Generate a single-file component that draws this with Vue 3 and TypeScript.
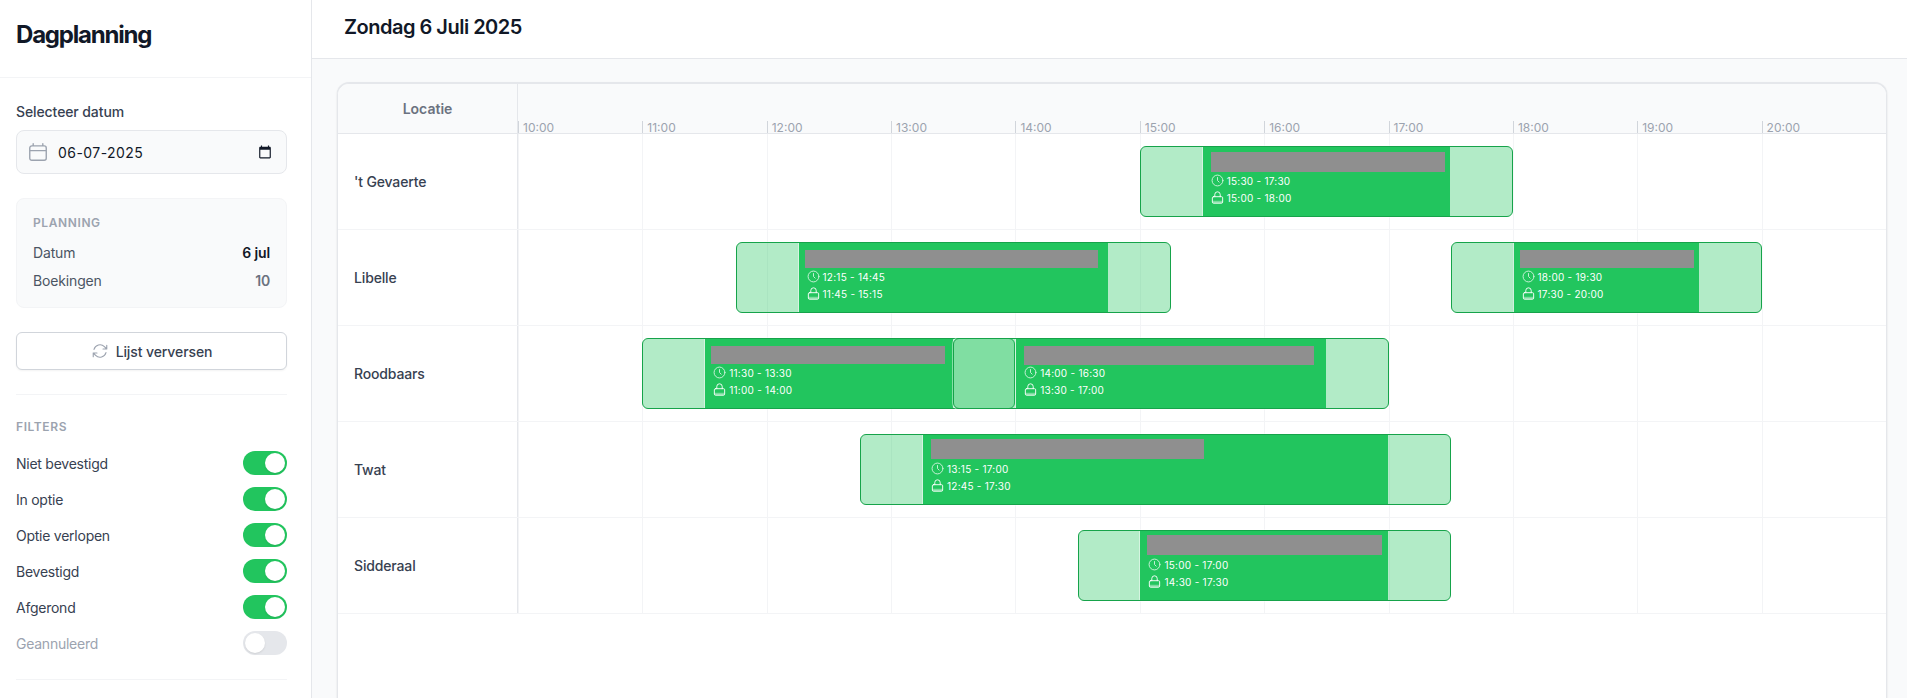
<script setup lang="ts">
interface Booking {
  outer: [string, string]
  inner: [string, string]
  barLeft: number
  barWidth: number
  barTop: number
  barHeight: number
}
interface Row {
  name: string
  bookings: Booking[]
}

const START = 10
const HOURS = 11

const hours: string[] = Array.from({ length: HOURS }, (_, i) => `${START + i}:00`)
const filters = [
  { label: 'Niet bevestigd', on: true },
  { label: 'In optie', on: true },
  { label: 'Optie verlopen', on: true },
  { label: 'Bevestigd', on: true },
  { label: 'Afgerond', on: true },
  { label: 'Geannuleerd', on: false },
]

const rows: Row[] = [
  { name: "'t Gevaerte", bookings: [{ outer: ['15:00', '18:00'], inner: ['15:30', '17:30'], barLeft: 8, barWidth: 234, barTop: 0, barHeight: 20 }] },
  {
    name: 'Libelle',
    bookings: [
      { outer: ['11:45', '15:15'], inner: ['12:15', '14:45'], barLeft: 6, barWidth: 293, barTop: 2, barHeight: 18 },
      { outer: ['17:30', '20:00'], inner: ['18:00', '19:30'], barLeft: 6, barWidth: 174, barTop: 2, barHeight: 18 },
    ],
  },
  {
    name: 'Roodbaars',
    bookings: [
      { outer: ['11:00', '14:00'], inner: ['11:30', '13:30'], barLeft: 6, barWidth: 234, barTop: 2, barHeight: 18 },
      { outer: ['13:30', '17:00'], inner: ['14:00', '16:30'], barLeft: 8, barWidth: 290, barTop: 2, barHeight: 19 },
    ],
  },
  { name: 'Twat', bookings: [{ outer: ['12:45', '17:30'], inner: ['13:15', '17:00'], barLeft: 8, barWidth: 273, barTop: -1, barHeight: 20 }] },
  { name: 'Sidderaal', bookings: [{ outer: ['14:30', '17:30'], inner: ['15:00', '17:00'], barLeft: 7, barWidth: 235, barTop: -1, barHeight: 20 }] },
]

function toHours(t: string): number {
  const [h, m] = t.split(':').map(Number)
  return h + m / 60
}

function outerStyle(b: Booking) {
  const s = toHours(b.outer[0])
  const e = toHours(b.outer[1])
  return { left: `${((s - START) / HOURS) * 100}%`, width: `${((e - s) / HOURS) * 100}%` }
}

function innerStyle(b: Booking) {
  const s = toHours(b.outer[0])
  const e = toHours(b.outer[1])
  const a = toHours(b.inner[0])
  const z = toHours(b.inner[1])
  return { marginLeft: `${((a - s) / (e - s)) * 100}%`, width: `${((z - a) / (e - s)) * 100}%` }
}

function barStyle(b: Booking) {
  return {
    marginLeft: `${b.barLeft - 8}px`,
    marginTop: `${b.barTop}px`,
    width: `${b.barWidth}px`,
    height: `${b.barHeight}px`,
  }
}

function range(r: [string, string]): string {
  return `${r[0]} - ${r[1]}`
}
</script>

<template>
  <div class="page">
    <aside class="sidebar">
      <div class="brand"><h1>Dagplanning</h1></div>
      <div class="side-body">
        <label class="field-label" for="datum">Selecteer datum</label>
        <div class="date-field">
          <svg class="cal" viewBox="0 0 24 24" fill="none" stroke="currentColor" stroke-width="1.5" stroke-linecap="round" stroke-linejoin="round">
            <path d="M6.75 3v2.25M17.25 3v2.25M3 18.75V7.5a2.25 2.25 0 0 1 2.25-2.25h13.5A2.25 2.25 0 0 1 21 7.5v11.25A2.25 2.25 0 0 1 18.75 21H5.25A2.25 2.25 0 0 1 3 18.75ZM3 10.5h18" />
          </svg>
          <input id="datum" class="date-input" type="text" value="06-07-2025" readonly />
          <svg class="picker" viewBox="0 0 24 24" fill="currentColor">
            <path d="M20 3h-1V1h-2v2H7V1H5v2H4c-1.1 0-2 .9-2 2v16c0 1.1.9 2 2 2h16c1.1 0 2-.9 2-2V5c0-1.1-.9-2-2-2zm0 18H4V8h16v13z" />
          </svg>
        </div>

        <section class="summary">
          <h2 class="caps">PLANNING</h2>
          <div class="sum-row first"><span>Datum</span><strong>6 jul</strong></div>
          <div class="sum-row"><span>Boekingen</span><strong class="muted">10</strong></div>
        </section>

        <button class="refresh" type="button">
          <svg viewBox="0 0 24 24" fill="none" stroke="currentColor" stroke-width="1.5" stroke-linecap="round" stroke-linejoin="round">
            <path d="M16.023 9.348h4.992v-.001M2.985 19.644v-4.992m0 0h4.992m-4.993 0 3.181 3.183a8.25 8.25 0 0 0 13.803-3.7M4.031 9.865a8.25 8.25 0 0 1 13.803-3.7l3.181 3.182m0-4.991v4.99" />
          </svg>
          <span>Lijst verversen</span>
        </button>

        <hr class="divider" />

        <h2 class="caps filters-title">FILTERS</h2>
        <ul class="filters">
          <li v-for="f in filters" :key="f.label" :class="{ off: !f.on }">
            <span>{{ f.label }}</span>
            <span class="toggle" :class="{ on: f.on }"><i class="knob"></i></span>
          </li>
        </ul>

        <hr class="divider" />
      </div>
    </aside>

    <main class="main">
      <header class="topbar"><h2>Zondag 6 Juli 2025</h2></header>
      <div class="content">
        <div class="card">
          <div class="head-row">
            <div class="head-loc">Locatie</div>
            <div class="head-times">
              <div v-for="h in hours" :key="h" class="tick">{{ h }}</div>
            </div>
          </div>

          <div v-for="row in rows" :key="row.name" class="row">
            <div class="row-name">{{ row.name }}</div>
            <div class="track">
              <div class="cells"><div v-for="h in hours" :key="h" class="cell"></div></div>
              <div v-for="(b, i) in row.bookings" :key="i" class="booking" :style="outerStyle(b)">
                <div class="solid" :style="innerStyle(b)">
                  <div class="bar-slot"><div class="bar" :style="barStyle(b)"></div></div>
                  <div class="time">
                    <svg viewBox="0 0 24 24" fill="none" stroke="currentColor" stroke-width="1.7" stroke-linecap="round" stroke-linejoin="round" class="ico dim">
                      <circle cx="12" cy="12" r="10" />
                      <path d="M12 6.5V12l3 3" />
                    </svg>
                    <span>{{ range(b.inner) }}</span>
                  </div>
                  <div class="time">
                    <svg viewBox="0 0 24 24" fill="none" stroke="currentColor" stroke-width="1.7" stroke-linecap="round" stroke-linejoin="round" class="ico">
                      <path d="M7 10.5V6.5a5 5 0 0 1 10 0v4" />
                      <rect x="2.5" y="10.5" width="19" height="12" rx="2" />
                      <path d="M2.5 18h19v2.5a2 2 0 0 1-2 2h-15a2 2 0 0 1-2-2z" fill="currentColor" opacity="0.4" stroke="none" />
                    </svg>
                    <span>{{ range(b.outer) }}</span>
                  </div>
                </div>
              </div>
            </div>
          </div>
        </div>
      </div>
    </main>
  </div>
</template>

<style>
html, body { margin: 0; height: 100%; overflow: hidden; background: #fff; }
</style>

<style scoped>
* { box-sizing: border-box; }

.page {
  display: flex;
  height: 698px;
  overflow: hidden;
  font-family: Inter, "Liberation Sans", sans-serif;
  color: #374151;
}

.sidebar {
  width: 312px;
  flex: none;
  background: #fff;
  border-right: 1px solid #e5e7eb;
}
.brand {
  height: 78px;
  padding: 21px 16px 0;
  border-bottom: 1px solid #f3f4f6;
}
.brand h1 {
  margin: 0;
  font-size: 24px;
  line-height: 28px;
  font-weight: 700;
  letter-spacing: -1.2px;
  color: #111827;
}
.side-body { padding: 24px 24px 0 16px; }

.field-label {
  display: block;
  font-size: 14px;
  line-height: 20px;
  font-weight: 500;
  letter-spacing: -0.1px;
  color: #374151;
}
.date-field {
  position: relative;
  margin-top: 8px;
  height: 44px;
}
.date-input {
  width: 100%;
  height: 100%;
  padding: 0 40px 0 41px;
  background: #f9fafb;
  border: 1px solid #e5e7eb;
  border-radius: 8px;
  font: 400 14px Inter, sans-serif;
  letter-spacing: 0.45px;
  color: #111827;
  outline: none;
}
.cal {
  position: absolute;
  left: 11px;
  top: 11px;
  width: 22px;
  height: 22px;
  color: #9ca3af;
}
.picker {
  position: absolute;
  right: 15px;
  top: 15px;
  width: 14px;
  height: 14px;
  color: #111827;
}

.summary {
  margin-top: 24px;
  height: 110px;
  padding: 16px 16px 0;
  background: #f9fafb;
  border: 1px solid #f3f4f6;
  border-radius: 8px;
}
.caps {
  margin: 0;
  font-size: 12px;
  line-height: 16px;
  font-weight: 600;
  letter-spacing: 0.6px;
  color: #9ca3af;
}
.sum-row {
  display: flex;
  justify-content: space-between;
  margin-top: 8px;
  font-size: 14px;
  line-height: 20px;
  letter-spacing: -0.15px;
  color: #4b5563;
}
.sum-row.first { margin-top: 12px; }
.sum-row strong { font-weight: 600; color: #111827; }
.sum-row strong.muted { color: #6b7280; }

.refresh {
  display: flex;
  align-items: center;
  justify-content: center;
  gap: 7px;
  width: 100%;
  height: 38px;
  margin-top: 24px;
  background: #fff;
  border: 1px solid #d1d5db;
  border-radius: 6px;
  box-shadow: 0 1px 2px rgba(0, 0, 0, 0.05);
  font: 500 14px Inter, sans-serif;
  letter-spacing: -0.1px;
  color: #374151;
}
.refresh svg { width: 18px; height: 18px; color: #9ca3af; }

.divider {
  margin: 24px 0 0;
  border: 0;
  border-top: 1px solid #f3f4f6;
}
.filters-title { margin-top: 24px; }
.filters {
  list-style: none;
  margin: 16px 0 0;
  padding: 0;
  display: flex;
  flex-direction: column;
  gap: 12px;
}
.filters li {
  display: flex;
  align-items: center;
  justify-content: space-between;
  height: 24px;
  font-size: 14px;
  letter-spacing: -0.25px;
  color: #374151;
}
.filters li.off { color: #9ca3af; }
.toggle {
  display: flex;
  width: 44px;
  height: 24px;
  padding: 2px;
  border-radius: 12px;
  background: #e5e7eb;
}
.toggle.on { background: #22c55e; justify-content: flex-end; }
.knob {
  width: 20px;
  height: 20px;
  border-radius: 50%;
  background: #fff;
  box-shadow: 0 1px 2px rgba(0, 0, 0, 0.1);
}

.main {
  flex: 1;
  min-width: 0;
  display: flex;
  flex-direction: column;
  background: #f9fafb;
  overflow: hidden;
}
.topbar {
  height: 59px;
  flex: none;
  padding: 13px 32px 0;
  background: #fff;
  border-bottom: 1px solid #e5e7eb;
}
.topbar h2 {
  margin: 0;
  font-size: 20px;
  line-height: 28px;
  font-weight: 600;
  letter-spacing: -0.5px;
  color: #111827;
}
.content {
  flex: 1;
  padding: 24px 20px 0 25px;
}
.card {
  height: 700px;
  background: #fff;
  border: 1px solid #e5e7eb;
  border-radius: 12px;
  overflow: hidden;
  box-shadow: 0 -1px 0 #e5e7eb, 0 0 2px rgba(0, 0, 0, 0.12);
}

.head-row {
  display: flex;
  height: 50px;
  background: #f9fafb;
  border-bottom: 1px solid #e5e7eb;
}
.head-loc {
  width: 180px;
  flex: none;
  display: flex;
  align-items: center;
  justify-content: center;
  border-right: 1px solid #e5e7eb;
  font-size: 14px;
  font-weight: 600;
  color: #6b7280;
}
.head-times {
  flex: 1;
  display: flex;
  align-items: flex-end;
}
.tick {
  flex: 1 1 0;
  height: 12px;
  padding-left: 4px;
  border-left: 1px solid #d1d5db;
  font-size: 12px;
  line-height: 14px;
  color: #9ca3af;
}

.row {
  display: flex;
  height: 96px;
  border-bottom: 1px solid #f3f4f6;
}
.row-name {
  width: 180px;
  flex: none;
  display: flex;
  align-items: center;
  padding-left: 16px;
  border-right: 1px solid #e5e7eb;
  font-size: 14px;
  font-weight: 500;
  letter-spacing: -0.15px;
  color: #374151;
}
.track {
  position: relative;
  flex: 1;
}
.cells {
  display: flex;
  height: 100%;
}
.cell {
  flex: 1 1 0;
  border-left: 1px solid #f3f4f6;
}

.booking {
  position: absolute;
  top: 12px;
  height: 71px;
  display: flex;
  overflow: hidden;
  background: rgba(34, 197, 94, 0.35);
  border: 1px solid #16a34a;
  border-radius: 6px;
  box-shadow: 0 0 0 1px rgba(255, 255, 255, 0.45);
}
.solid {
  flex: none;
  height: 100%;
  padding: 5px 4px 0 8px;
  background: #22c55e;
  color: #fff;
  box-shadow: -1px 0 0 rgba(255, 255, 255, 0.45);
}
.bar-slot {
  display: flow-root;
  height: 20px;
}
.bar {
  background: #8f8f8f;
}
.time {
  display: flex;
  align-items: center;
  gap: 3px;
  height: 17px;
  font-size: 10px;
  font-weight: 400;
  letter-spacing: 0.25px;
  white-space: nowrap;
}
.ico { width: 13px; height: 13px; flex: none; }
.ico.dim { opacity: 0.8; }
</style>
